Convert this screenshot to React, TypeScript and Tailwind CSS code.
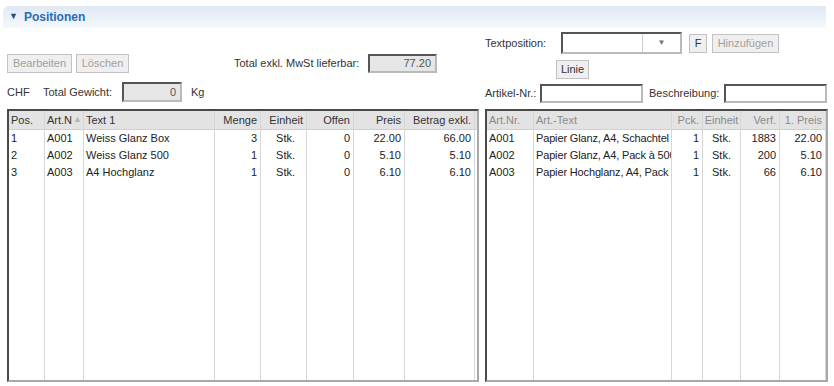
import React from "react";

type Col = { label: string; w: string; align: "left" | "right" | "center" };

const leftCols: Col[] = [
  { label: "Pos.", w: "w-[36px]", align: "left" },
  { label: "Art.N", w: "w-[39px]", align: "left" },
  { label: "Text 1", w: "w-[131px]", align: "left" },
  { label: "Menge", w: "w-[46px]", align: "right" },
  { label: "Einheit", w: "w-[46px]", align: "right" },
  { label: "Offen", w: "w-[47px]", align: "right" },
  { label: "Preis", w: "w-[51px]", align: "right" },
  { label: "Betrag exkl.", w: "w-[70px]", align: "right" },
];

const leftRows = [
  ["1", "A001", "Weiss Glanz Box", "3", "Stk.", "0", "22.00", "66.00"],
  ["2", "A002", "Weiss Glanz 500", "1", "Stk.", "0", "5.10", "5.10"],
  ["3", "A003", "A4 Hochglanz", "1", "Stk.", "0", "6.10", "6.10"],
];

const rightCols: Col[] = [
  { label: "Art.Nr.", w: "w-[47px]", align: "left" },
  { label: "Art.-Text", w: "w-[138px]", align: "left" },
  { label: "Pck.", w: "w-[31px]", align: "right" },
  { label: "Einheit", w: "w-[38px]", align: "center" },
  { label: "Verf.", w: "w-[39px]", align: "right" },
  { label: "1. Preis", w: "w-[46px]", align: "right" },
];

const rightRows = [
  ["A001", "Papier Glanz, A4, Schachtel", "1", "Stk.", "1883", "22.00"],
  ["A002", "Papier Glanz, A4, Pack à 500", "1", "Stk.", "200", "5.10"],
  ["A003", "Papier Hochglanz, A4, Pack", "1", "Stk.", "66", "6.10"],
];

const alignCls = {
  left: "justify-start pl-[2px]",
  right: "justify-end pr-[3px]",
  center: "justify-center",
};

function Grid({ cols, rows, muted, tail }: { cols: Col[]; rows: string[][]; muted?: boolean; tail?: boolean }) {
  return (
    <div className="flex h-[273px] border-2 border-t-[#4a4a4a] border-l-[#4a4a4a] border-r-[#a9a9a9] border-b-[#a9a9a9] bg-white overflow-hidden">
      {cols.map((c, i) => (
        <div key={i} className={`${c.w} shrink-0 flex flex-col border-r border-[#d6d6d6]`}>
          <div
            className={`h-[19px] flex items-center bg-[#e3e3e3] border-b border-[#cfcfcf] whitespace-nowrap overflow-hidden ${alignCls[c.align]} ${
              muted ? "text-[#8a8a8a]" : "text-[#333]"
            }`}
          >
            {c.label}
            {!muted && i === 1 && <span className="text-[#b5b5b5] text-[9px] ml-[1px]">▲</span>}
          </div>
          {rows.map((r, j) => (
            <div
              key={j}
              className={`h-[17px] flex items-center whitespace-nowrap overflow-hidden text-[#222] ${
                c.label === "Einheit" && !muted ? "justify-end pr-[11px]" : alignCls[c.align]
              } ${c.label === "Art.-Text" ? "tracking-[-0.15px] pl-[1px]" : ""}`}
            >
              {r[i]}
            </div>
          ))}
        </div>
      ))}
      {tail && (
        <div className="flex-1 flex flex-col">
          <div className="h-[19px] bg-[#e3e3e3] border-b border-[#cfcfcf]" />
        </div>
      )}
    </div>
  );
}

function Btn({ children, disabled, w }: { children: React.ReactNode; disabled?: boolean; w: string }) {
  return (
    <div
      className={`${w} h-[19px] flex items-center justify-center bg-[#efefef] border border-[#c2c2c2] ${
        disabled ? "text-[#a0a0a0]" : "text-[#333]"
      }`}
    >
      {children}
    </div>
  );
}

function Field({ w, value, gray }: { w: string; value?: string; gray?: boolean }) {
  return (
    <div
      className={`${w} h-full flex items-center justify-end pr-[4px] border-2 border-t-[#555] border-l-[#555] border-r-[#b9b9b9] border-b-[#b9b9b9] ${
        gray ? "bg-[#e6e6e6] text-[#555]" : "bg-white"
      }`}
    >
      {value}
    </div>
  );
}

export default function App() {
  return (
    <div className="w-[834px] h-[386px] bg-white text-[11px] text-[#333] pt-[6px] overflow-hidden" style={{ fontFamily: '"Liberation Sans", Arial, sans-serif' }}>
      <div className="mx-[3px] w-[823px] h-[22px] rounded-tl-[6px] bg-gradient-to-b from-[#dfe9f4] to-[#f5f8fc] flex items-center pl-[6px]">
        <span className="text-[9px] text-[#1f4f8a] mr-[6px]">▼</span>
        <span className="font-bold text-[#2b6cb3] text-[12px]">Positionen</span>
      </div>
      <div className="pl-[7px] pt-[4px] grid grid-cols-[472px_343px] gap-x-[6px] gap-y-[6px]">
        {/* left controls */}
        <div className="pt-[22px] flex flex-col">
          <div className="h-[19px] flex items-center">
            <Btn w="w-[65px]" disabled>Bearbeiten</Btn>
            <div className="ml-[4px]">
              <Btn w="w-[53px]" disabled>Löschen</Btn>
            </div>
            <span className="ml-[105px] w-[124px] whitespace-nowrap">Total exkl. MwSt lieferbar:</span>
            <div className="ml-[10px] h-[19px]">
              <Field w="w-[69px]" value="77.20" gray />
            </div>
          </div>
          <div className="mt-[9px] h-[20px] flex items-center">
            <span className="w-[36px]">CHF</span>
            <span className="w-[79px] whitespace-nowrap">Total Gewicht:</span>
            <div className="h-[20px]">
              <Field w="w-[60px]" value="0" gray />
            </div>
            <span className="ml-[9px]">Kg</span>
          </div>
        </div>
        {/* right controls */}
        <div className="flex flex-col">
          <div className="h-[22px] flex items-center">
            <span className="w-[76px]">Textposition:</span>
            <div className="w-[121px] h-[22px] flex border-2 border-t-[#555] border-l-[#555] border-r-[#b9b9b9] border-b-[#b9b9b9] bg-white">
              <div className="flex-1" />
              <div className="w-[38px] border-l border-[#cfcfcf] flex items-center justify-center text-[#777] text-[8px]">▼</div>
            </div>
            <div className="ml-[7px]">
              <Btn w="w-[18px]">F</Btn>
            </div>
            <div className="ml-[5px]">
              <Btn w="w-[67px]" disabled>Hinzufügen</Btn>
            </div>
          </div>
          <div className="mt-[6px] ml-[71px]">
            <Btn w="w-[33px]">Linie</Btn>
          </div>
          <div className="mt-[5px] h-[19px] flex items-center">
            <span className="w-[55px] whitespace-nowrap">Artikel-Nr.:</span>
            <Field w="w-[103px]" />
            <span className="ml-[6px] w-[75px] whitespace-nowrap">Beschreibung:</span>
            <Field w="w-[103px]" />
          </div>
        </div>
        <Grid cols={leftCols} rows={leftRows} tail />
        <Grid cols={rightCols} rows={rightRows} muted />
      </div>
    </div>
  );
}
